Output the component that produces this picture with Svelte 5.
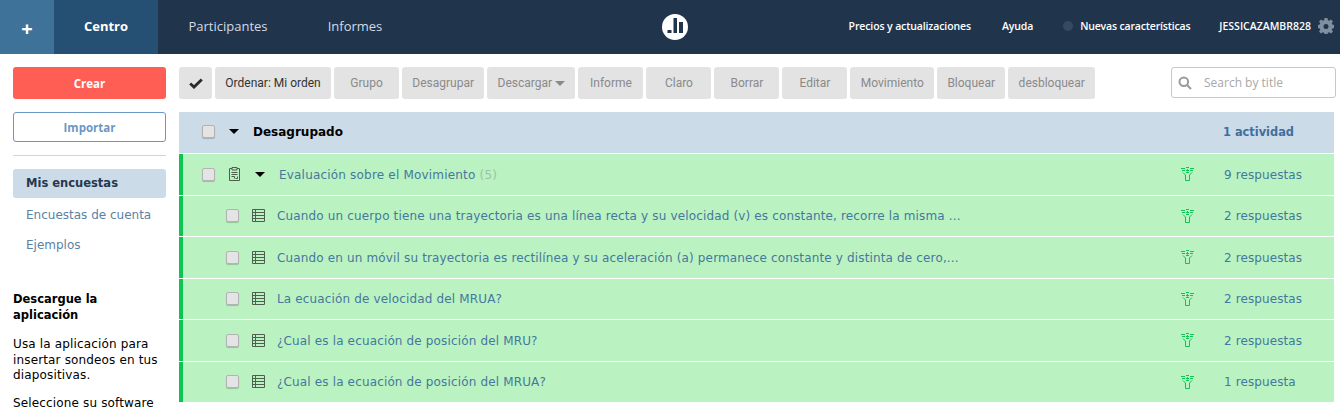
<script>
  const buttons = [
    { t: 'Grupo' }, { t: 'Desagrupar' }, { t: 'Descargar', caret: true }, { t: 'Informe' }, { t: 'Claro' },
    { t: 'Borrar' }, { t: 'Editar' }, { t: 'Movimiento' }, { t: 'Bloquear' }, { t: 'desbloquear' }
  ];
  const rows = [
    { t: 'Cuando un cuerpo tiene una trayectoria es una línea recta y su velocidad (v) es constante, recorre la misma ...', r: '2 respuestas' },
    { t: 'Cuando en un móvil su trayectoria es rectilínea y su aceleración (a) permanece constante y distinta de cero,...', r: '2 respuestas' },
    { t: 'La ecuación de velocidad del MRUA?', r: '2 respuestas' },
    { t: '¿Cual es la ecuación de posición del MRU?', r: '2 respuestas' },
    { t: '¿Cual es la ecuación de posición del MRUA?', r: '1 respuesta' }
  ];
</script>

{#snippet funnel()}
  <svg class="funnel" width="13" height="14" viewBox="0 0 13 14" fill="none" stroke="#0cc552" stroke-width="1">
    <path d="M0 1.500h4M1 3.500h3M9 1.500h4M9 3.500h3M5 .5h3M5 5.500h3M6.500 2v2.500M5 3.500h3" />
    <path d="M2 5.500l2.500 2.500v5.500h4V8L11 5.500" />
  </svg>
{/snippet}

{#snippet listIcon()}
  <svg class="ic" width="13" height="13" viewBox="0 0 13 13" fill="none" stroke="#4f5f4f" stroke-width="1">
    <path d="M.5 .5h12v12H.5zM.5 3.500h12M.5 6.500h12M.5 9.500h12M3.500 .5v12" />
  </svg>
{/snippet}

<div class="page">
  <header class="top">
    <div class="plus">+</div>
    <div class="tab active">Centro</div>
    <div class="tab t2">Participantes</div>
    <div class="tab t3">Informes</div>
    <div class="logo">
      <svg width="26" height="26" viewBox="0 0 26 26">
        <circle cx="13" cy="13" r="13" fill="#fff" />
        <path d="M5.500 16h4v3h-4zM11.500 4h3.500v15h-3.500zM17 8h4v11h-4z" fill="#20344c" />
      </svg>
    </div>
    <nav class="right">
      <span class="r1">Precios y actualizaciones</span>
      <span class="r2">Ayuda</span>
      <span class="dot"></span>
      <span class="r3">Nuevas características</span>
      <span class="r4">JESSICAZAMBR828</span>
      <svg class="gear" width="16" height="16" viewBox="0 0 16 16">
        <path fill-rule="evenodd" fill="#7f8fa0" d="M6.500 0h3l.4 2.200 1.300.6L13 1.500l2 2-1.300 1.800.6 1.300L16 7v3l-1.700.4-.6 1.300 1.300 1.800-2 2-1.800-1.300-1.300.6L9.500 16h-3l-.4-1.200-1.300-.6L3 15.500l-2-2 1.300-1.800-.6-1.300L0 10V7l1.700-.4.600-1.300L1 3.500l2-2 1.800 1.300 1.300-.6zM8 6a2.500 2.500 0 1 0 0 5 2.500 2.500 0 0 0 0-5z" />
      </svg>
    </nav>
  </header>

  <div class="body">
    <aside class="side">
      <button class="crear">Crear</button>
      <button class="importar">Importar</button>
      <hr />
      <div class="mine">Mis encuestas</div>
      <div class="link">Encuestas de cuenta</div>
      <div class="link">Ejemplos</div>
      <h4>Descargue la aplicación</h4>
      <p>Usa la aplicación para insertar sondeos en tus diapositivas.</p>
      <p>Seleccione su software</p>
    </aside>

    <main class="main">
      <div class="toolbar">
        <button class="btn check" aria-label="Seleccionar">
          <svg width="14" height="11" viewBox="0 0 14 11"><path d="M1.200 5.500l3.800 3.600 7.800-7.700" fill="none" stroke="#2b2b2b" stroke-width="2.800" /></svg>
        </button>
        <button class="btn dark">Ordenar: Mi orden</button>
        {#each buttons as b}
          <button class="btn">{b.t}{#if b.caret}<span class="caret"></span>{/if}</button>
        {/each}
        <div class="search">
          <svg width="14" height="14" viewBox="0 0 14 14" fill="none" stroke="#9a9a9a" stroke-width="2"><circle cx="5.800" cy="5.800" r="4.300" /><path d="M9 9l4 4" /></svg>
          <span>Search by title</span>
        </div>
      </div>

      <div class="group">
        <span class="cb"></span>
        <span class="tri g"></span>
        <strong>Desagrupado</strong>
        <span class="count">1 actividad</span>
      </div>

      <div class="row parent">
        <span class="cb"></span>
        <svg class="clip" width="11" height="14" viewBox="0 0 11 14" fill="none" stroke="#4f5f4f" stroke-width="1">
          <path d="M3 1.500H.5v12h10v-12H8M3 .5h5v2.500H3zM2.500 5.500h6M2.500 7.500h6M2.500 9.500h3v2M8.500 9.500v2h-2" />
        </svg>
        <span class="tri p"></span>
        <span class="title ptitle">Evaluación sobre el Movimiento <em>(5)</em></span>
        {@render funnel()}
        <span class="resp">9 respuestas</span>
      </div>

      {#each rows as row}
        <div class="row child">
          <span class="cb"></span>
          {@render listIcon()}
          <span class="title ctitle">{row.t}</span>
          {@render funnel()}
          <span class="resp">{row.r}</span>
        </div>
      {/each}
    </main>
  </div>
</div>

<style>
  :global(body) { margin: 0; overflow: hidden; background: #fff; }
  .page { width: 1340px; height: 407px; overflow: hidden; font-family: "DejaVu Sans", sans-serif; }

  .top { height: 54px; background: #20344c; display: flex; align-items: center; color: #fff; position: relative; font-family: "Open Sans", sans-serif; }
  .plus { width: 54px; height: 54px; background: #3f7299; display: flex; align-items: center; justify-content: center; font-size: 20px; font-weight: 700; padding-top: 2px; box-sizing: border-box; }
  .tab { height: 52px; padding-bottom: 2px; display: flex; align-items: center; justify-content: center; font-size: 13px; color: #d3dbe4; }
  .active { width: 104px; background: #265073; color: #fff; font-weight: 700; }
  .t2 { width: 140px; }
  .t3 { width: 110px; margin-left: 2px; }
  .logo { position: absolute; left: 661.500px; top: 14px; width: 26px; height: 26px; }
  .right { margin-left: auto; display: flex; align-items: center; font-size: 10.500px; font-weight: 600; color: #fff; padding-right: 6px; padding-bottom: 2px; white-space: nowrap; }
  .r1, .r2 { letter-spacing: -.12px; }
  .r3 { letter-spacing: -.17px; }
  .r2 { margin-left: 31px; }
  .dot { width: 10px; height: 10px; border-radius: 50%; background: #344a63; margin-left: 30px; }
  .r3 { margin-left: 7px; }
  .r4 { margin-left: 29px; }
  .gear { margin-left: 7px; }

  .body { display: flex; align-items: flex-start; }
  .side { width: 153px; margin: 13px 13px 0 13px; flex: none; }
  .crear, .importar { display: block; width: 153px; font: 700 11.500px "Open Sans", sans-serif; border-radius: 3px; padding: 0; }
  .crear { height: 32px; background: #ff5e54; color: #fff; border: none; }
  .importar { height: 30px; margin-top: 13px; background: #fff; color: #6a97c4; border: 1px solid #6a97c4; }
  hr { border: none; border-top: 1px solid #d5d5d5; margin: 13px 0; }
  .mine { height: 29px; line-height: 28px; background: #ccdbe8; border-radius: 3px; padding-left: 13px; font-size: 11.500px; font-weight: 700; color: #26384f; box-sizing: border-box; }
  .link { padding-left: 13px; font-size: 12px; color: #5b82a6; margin-top: 15px; line-height: 15px; }
  .mine + .link { margin-top: 10px; }
  h4 { margin: 38px 0 0; font-size: 11.500px; line-height: 16px; color: #000; font-weight: 700; }
  p { margin: 12px 0 0; font-size: 12px; letter-spacing: .15px; line-height: 15.500px; color: #000; }
  h4 + p { margin-top: 14px; }

  .main { width: 1158px; margin-top: 13px; flex: none; }
  .toolbar { display: flex; gap: 3px; height: 45px; }
  .btn { height: 32px; min-width: 65px; padding: 0 10.300px; border: none; border-radius: 3px; background: #e3e3e3; color: #8a8a8a; font: 12px Roboto, sans-serif; display: flex; align-items: center; justify-content: center; box-sizing: border-box; white-space: nowrap; }
  .check { min-width: 33px; width: 33px; padding: 0; }
  .dark { color: #333; width: 116px; padding: 0; }
  .caret { width: 0; height: 0; border: 5px solid transparent; border-top: 5px solid #8a8a8a; border-bottom: 0; margin-left: 3px; }
  .search { margin-left: auto; margin-right: 1px; width: 165px; height: 31px; border: 1px solid #c8c8c8; border-radius: 3px; box-sizing: border-box; display: flex; align-items: center; padding-left: 6px; gap: 12px; color: #a8a8a8; font: 12px "Open Sans", sans-serif; }

  .group { height: 42px; box-sizing: border-box; padding-bottom: 2px; background: #ccdbe8; display: flex; align-items: center; padding-left: 23px; margin-right: 3px; border-bottom: 1px solid #fff; }
  .group strong { font-size: 12px; color: #000; margin-left: 14px; }
  .count { margin-left: auto; width: 111px; font-size: 11.400px; font-weight: 700; color: #3f6f9f; }

  .cb { width: 11px; height: 11px; border: 1px solid #b3b3b3; background: #e4e4e4; border-radius: 2px; flex: none; box-shadow: 0 1px 1px #0003; }
  .tri { width: 0; height: 0; border: 5px solid transparent; border-top: 5px solid #000; border-bottom: 0; flex: none; }
  .tri.g { margin-left: 14px; }

  .row { height: 40.500px; margin-bottom: 1px; background: #baf3c1; border-left: 4px solid #0cc552; display: flex; align-items: center; margin-right: 3px; box-sizing: border-box; }
  .row.parent { padding-left: 19px; }
  .row.child { padding-left: 43px; }
  .clip { margin-left: 14px; flex: none; }
  .tri.p { margin-left: 15px; }
  .ic { margin-left: 13px; flex: none; }
  .title { font-size: 12px; color: #46779e; white-space: nowrap; flex: none; padding-top: 1px; }
  .ptitle { margin-left: 14px; width: 887px; letter-spacing: .19px; }
  .ptitle em { font-style: normal; color: #9cc4a3; }
  .ctitle { margin-left: 12px; width: 889px; letter-spacing: .15px; }
  .funnel { flex: none; margin-left: 15px; }
  .resp { margin-left: 30px; font-size: 12px; color: #46779e; letter-spacing: .1px; white-space: nowrap; padding-top: 1px; }
</style>
